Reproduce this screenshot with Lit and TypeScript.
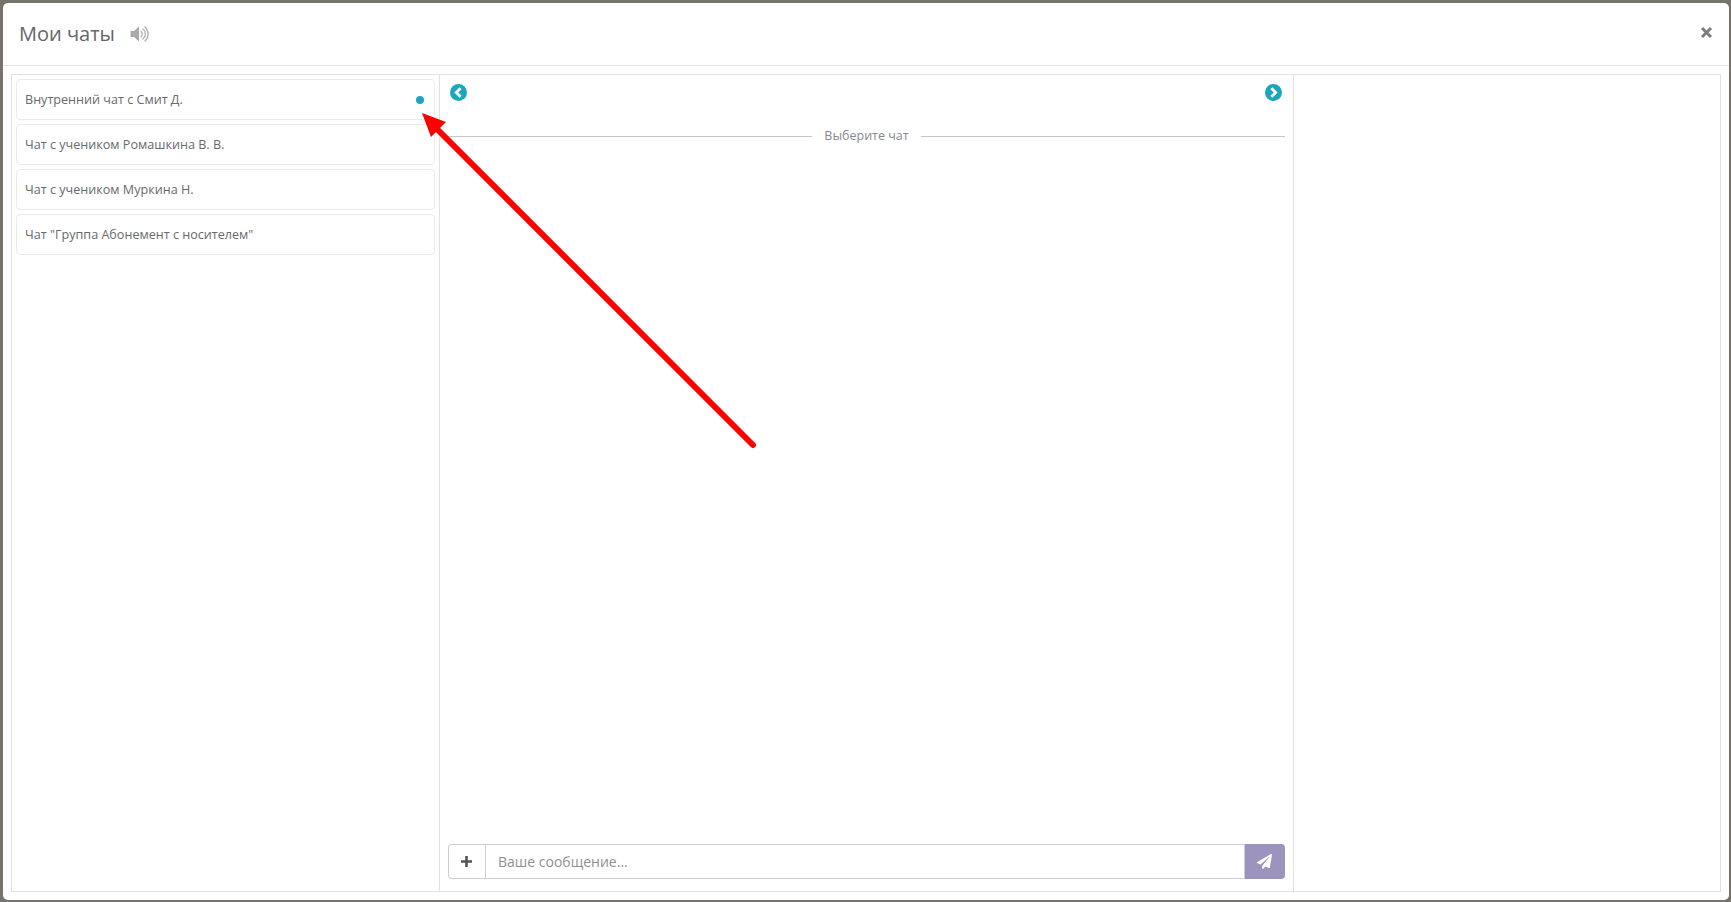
import { LitElement, html, css, svg } from "lit";
import { customElement } from "lit/decorators.js";

const FONT = css`"Open Sans", "Noto Sans", "Liberation Sans", sans-serif`;

@customElement("app-root")
export class AppRoot extends LitElement {
  static styles = css`
    :host {
      display: block;
      width: 1731px;
      height: 902px;
      box-sizing: border-box;
      padding: 3px 2px 2px 3px;
      background: #75736c;
      font-family: ${FONT};
      overflow: hidden;
      position: relative;
    }
    .modal {
      height: 100%;
      background: #fff;
      border-radius: 5px;
      display: flex;
      flex-direction: column;
      box-sizing: border-box;
    }
    .head {
      height: 63px;
      flex: none;
      box-sizing: border-box;
      border-bottom: 1px solid #e5e5e5;
      display: flex;
      align-items: center;
      padding: 0 16px 0 16px;
      color: #676a6c;
    }
    .title { font-size: 20px; font-weight: 400; line-height: 28px; color: #666; }
    .sound { margin-left: 15px; width: 20px; height: 18px; }
    .close { margin-left: auto; width: 13px; height: 13px; margin-top: -4px; }
    .body {
      flex: 1;
      margin: 8px 8px 8px 8px;
      border: 1px solid #e1e1e1;
      display: flex;
      min-height: 0;
    }
    .list {
      width: 428px;
      flex: none;
      box-sizing: border-box;
      border-right: 1px solid #e1e1e1;
      padding: 4px;
      display: flex;
      flex-direction: column;
      gap: 4px;
    }
    .item {
      height: 41px;
      box-sizing: border-box;
      border: 1px solid #ebebeb;
      border-radius: 4px;
      display: flex;
      align-items: center;
      justify-content: space-between;
      padding: 0 10px 1px 8px;
      font-size: 12.6px;
      color: #676a6c;
    }
    .dot { width: 8px; height: 8px; border-radius: 50%; background: #1ca6bd; margin-top: 2px; }
    .chat {
      width: 854px;
      flex: none;
      box-sizing: border-box;
      border-right: 1px solid #e1e1e1;
      padding: 8px 8px 12px 8px;
      display: flex;
      flex-direction: column;
    }
    .nav { display: flex; justify-content: space-between; padding: 1px 3px 1px 2px; height: 17px; }
    .nav svg { width: 17px; height: 17px; display: block; }
    .sep {
      margin-top: 25px;
      display: flex;
      align-items: center;
      gap: 12px;
      font-size: 12.5px;
      line-height: 18px;
      color: #868a90;
    }
    .sep i { flex: 1; height: 1px; background: #c8c8c8; }
    .grow { flex: 1; }
    .input {
      height: 35px;
      display: flex;
      box-sizing: border-box;
    }
    .plus {
      width: 37px;
      box-sizing: border-box;
      border: 1px solid #d0cdd8;
      border-right: none;
      border-radius: 4px 0 0 4px;
      display: flex;
      align-items: center;
      justify-content: center;
      padding-right: 2px;
    }
    .plus svg { width: 13px; height: 13px; }
    .field {
      flex: 1;
      border: 1px solid #d0cdd8;
      padding: 0 12px;
      display: flex;
      align-items: center;
      font-size: 14px;
      color: #8f8f8f;
    }
    .send {
      width: 40px;
      background: #9d93bf;
      border-radius: 0 4px 4px 0;
      display: flex;
      align-items: center;
      justify-content: center;
      padding-right: 2px;
      box-sizing: border-box;
    }
    .send svg { width: 15px; height: 15px; }
    .aside { flex: 1; }
    .arrow { position: absolute; left: 0; top: 0; pointer-events: none; }
  `;

  private chevron(dir: "l" | "r") {
    const pts = dir === "l" ? "10.6,4.2 6.3,8.5 10.6,12.8" : "6.4,4.2 10.7,8.5 6.4,12.8";
    return html`<svg viewBox="0 0 17 17">
      <circle cx="8.5" cy="8.5" r="8.5" fill="#1ca6bd"></circle>
      <polyline points=${pts} fill="none" stroke="#fff" stroke-width="2.8"></polyline>
    </svg>`;
  }

  render() {
    const items = [
      "Внутренний чат с Смит Д.",
      "Чат с учеником Ромашкина В. В.",
      "Чат с учеником Муркина Н.",
      'Чат "Группа Абонемент с носителем"',
    ];
    return html`
      <div class="modal">
        <div class="head">
          <span class="title">Мои чаты</span>
          <svg class="sound" viewBox="0 0 20 18">
            <path d="M0.5 6h3.5l5-4.5v15l-5-4.5h-3.5z" fill="#aaa"></path>
            <path d="M11 6.2a3.6 3.6 0 0 1 0 5.6M13 4a6.4 6.4 0 0 1 0 10M15 2a9.4 9.4 0 0 1 0 14" fill="none" stroke="#b4b4b4" stroke-width="1.4" stroke-linecap="round"></path>
          </svg>
          <svg class="close" viewBox="0 0 13 13">
            <path d="M2 2l9 9M11 2l-9 9" stroke="#7d7d7d" stroke-width="3" fill="none"></path>
          </svg>
        </div>
        <div class="body">
          <div class="list">
            ${items.map(
              (t, i) => html`<div class="item"><span>${t}</span>${i === 0 ? html`<span class="dot"></span>` : ""}</div>`
            )}
          </div>
          <div class="chat">
            <div class="nav">${this.chevron("l")}${this.chevron("r")}</div>
            <div class="sep"><i></i><span>Выберите чат</span><i></i></div>
            <div class="grow"></div>
            <div class="input">
              <div class="plus">
                <svg viewBox="0 0 13 13"><path d="M6.5 1v11M1 6.5h11" stroke="#555" stroke-width="2.6" fill="none"></path></svg>
              </div>
              <div class="field">Ваше сообщение...</div>
              <div class="send">
                <svg viewBox="0 0 512 512"><path fill="#fff" d="M476 3.2L12.5 270.6c-18.1 10.4-15.8 35.6 2.2 43.2L121 358.4l287.3-253.2c5.5-4.9 13.3 2.6 8.6 8.3L176 407v80.5c0 23.6 28.5 32.9 42.5 15.8L282 426l124.6 52.2c14.2 6 30.4-2.9 33-18.2l72-432C515 7.8 493.3-6.8 476 3.2z"></path></svg>
              </div>
            </div>
          </div>
          <div class="aside"></div>
        </div>
      </div>
      <svg class="arrow" width="1731" height="902" viewBox="0 0 1731 902">
        ${svg`<path d="M753 445L432 124" stroke="#fe0000" stroke-width="6" stroke-linecap="round" fill="none"></path>
        <path d="M422 113L446 122L431 137z" fill="#fe0000"></path>`}
      </svg>
    `;
  }
}
